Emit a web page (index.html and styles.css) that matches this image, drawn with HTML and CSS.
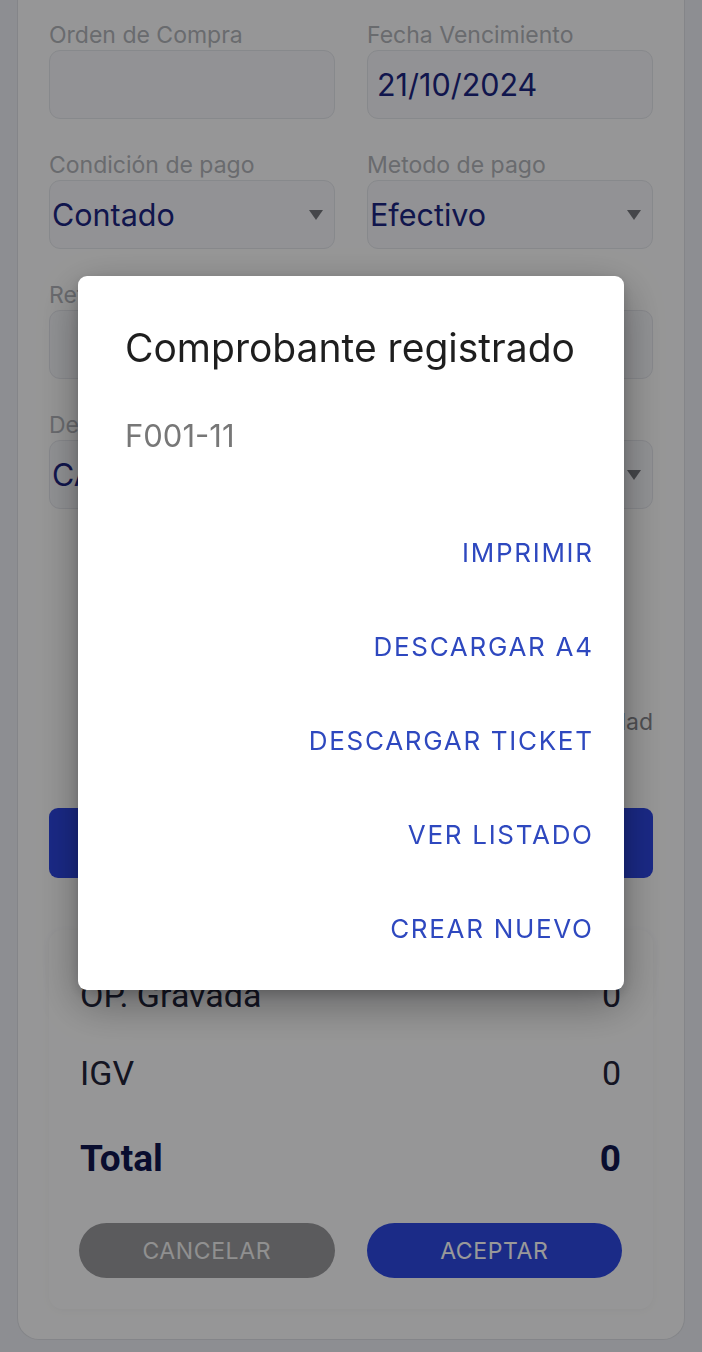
FILE: index.html
```html
<!DOCTYPE html>
<html lang="es">
<head>
<meta charset="utf-8">
<title>Comprobante registrado</title>
<link rel="stylesheet" href="styles.css">
</head>
<body>
<main class="page">
  <section class="card">
    <div class="grid2">
      <div class="field">
        <label class="label">Orden de Compra</label>
        <div class="input"></div>
      </div>
      <div class="field">
        <label class="label">Fecha Vencimiento</label>
        <div class="input text">21/10/2024</div>
      </div>
      <div class="field">
        <label class="label">Condición de pago</label>
        <div class="input select">Contado<span class="caret"></span></div>
      </div>
      <div class="field">
        <label class="label">Metodo de pago</label>
        <div class="input select">Efectivo<span class="caret"></span></div>
      </div>
      <div class="field span2">
        <label class="label">Referencia</label>
        <div class="input"></div>
      </div>
      <div class="field span2">
        <label class="label">Depósito</label>
        <div class="input select">CAJA PRINCIPAL<span class="caret"></span></div>
      </div>
    </div>

    <div class="option-row"><span class="option">Mostrar cantidad</span></div>

    <button class="primary">AGREGAR PRODUCTO</button>

    <div class="summary">
      <div class="sum-row"><span>OP. Gravada</span><span>0</span></div>
      <div class="sum-row"><span>IGV</span><span>0</span></div>
      <div class="sum-row total"><span>Total</span><span>0</span></div>
      <div class="actions">
        <button class="pill cancel">CANCELAR</button>
        <button class="pill accept">ACEPTAR</button>
      </div>
    </div>
  </section>
</main>

<div class="backdrop"></div>

<div class="dialog" role="dialog">
  <h2 class="dialog-title">Comprobante registrado</h2>
  <p class="dialog-body">F001-11</p>
  <div class="dialog-actions">
    <button class="text-btn">IMPRIMIR</button>
    <button class="text-btn">DESCARGAR A4</button>
    <button class="text-btn">DESCARGAR TICKET</button>
    <button class="text-btn">VER LISTADO</button>
    <button class="text-btn">CREAR NUEVO</button>
  </div>
</div>
</body>
</html>
```

FILE: styles.css
```css
* { box-sizing: border-box; }

html, body {
  margin: 0;
  padding: 0;
}

body {
  width: 702px;
  height: 1352px;
  overflow: hidden;
  background: #ebedf3;
  font-family: Inter, "Noto Sans", sans-serif;
}

.page {
  padding: 0 17px;
}

.card {
  background: #fbfbfc;
  border: 1px solid #dcdee4;
  border-top: none;
  border-radius: 0 0 22px 22px;
  padding: 21px 31px 30px;
  height: 1340px;
  display: flex;
  flex-direction: column;
}

.grid2 {
  display: grid;
  grid-template-columns: 1fr 1fr;
  column-gap: 32px;
  row-gap: 32px;
}

.span2 { grid-column: span 2; }

.field {
  display: flex;
  flex-direction: column;
  gap: 1px;
}

.label {
  font-size: 23px;
  line-height: 28px;
  color: #b0b2b8;
}

.input {
  height: 69px;
  border: 1px solid #e2e4ea;
  border-radius: 11px;
  background: #f3f4f8;
  display: flex;
  align-items: center;
  font-size: 30.5px;
  color: #1c2580;
}

.input.text { padding-left: 9px; }

.input.select {
  padding: 0 11px 0 2px;
  justify-content: space-between;
}

.caret {
  width: 0;
  height: 0;
  border-left: 7px solid transparent;
  border-right: 7px solid transparent;
  border-top: 10px solid #74767c;
}

.option-row {
  display: flex;
  justify-content: flex-end;
  margin-top: 199px;
}

.option {
  font-size: 23px;
  line-height: 28px;
  color: #85868b;
}

.primary {
  margin-top: 72px;
  height: 70px;
  border: none;
  border-radius: 9px;
  background: #2c45e0;
  color: #ffffff;
  font-family: inherit;
  font-size: 24px;
  letter-spacing: 1px;
}

.summary {
  margin-top: 52px;
  padding: 45px 32px 31px 31px;
  border-radius: 14px;
  box-shadow: 0 2px 10px rgba(0, 0, 0, 0.04);
  display: flex;
  flex-direction: column;
}

.sum-row {
  display: flex;
  justify-content: space-between;
  align-items: center;
  font-family: Roboto, "Liberation Sans", sans-serif;
  font-size: 34px;
  line-height: 40px;
  color: #22243a;
}

.sum-row + .sum-row { margin-top: 38px; }

.sum-row.total {
  margin-top: 44px;
  font-size: 37px;
  line-height: 44px;
  font-weight: 700;
  color: #10174f;
}

.actions {
  margin-top: 42px;
  display: grid;
  grid-template-columns: 1fr 1fr;
  column-gap: 32px;
  margin-left: -1px;
  margin-right: -1px;
}

.pill {
  height: 55px;
  border: none;
  border-radius: 28px;
  font-family: inherit;
  font-size: 23px;
  letter-spacing: 0.6px;
  color: #ffffff;
}

.pill.cancel { background: #98989c; color: #f0f0f0; }
.pill.accept { background: #2d49e2; }

.backdrop {
  position: fixed;
  inset: 0;
  background: rgba(0, 0, 0, 0.4);
}

.dialog {
  position: fixed;
  top: 276px;
  left: 78px;
  width: 546px;
  height: 714px;
  background: #ffffff;
  border-radius: 9px;
  box-shadow: 0 14px 44px rgba(0, 0, 0, 0.35), 0 4px 12px rgba(0, 0, 0, 0.15);
  padding: 49px 32px 16px 47px;
  display: flex;
  flex-direction: column;
}

.dialog-title {
  margin: 0;
  font-size: 39px;
  line-height: 46px;
  font-weight: 400;
  color: #1e1e1e;
}

.dialog-body {
  margin: 45px 0 0;
  font-size: 31px;
  line-height: 40px;
  color: #777777;
}

.dialog-actions {
  margin-top: 49px;
  display: flex;
  flex-direction: column;
  align-items: flex-end;
}

.text-btn {
  height: 94px;
  padding: 0;
  border: none;
  background: transparent;
  font-family: inherit;
  font-size: 26px;
  font-weight: 400;
  letter-spacing: 1.7px;
  margin-right: -1.7px;
  color: #2e48bf;
}
```
